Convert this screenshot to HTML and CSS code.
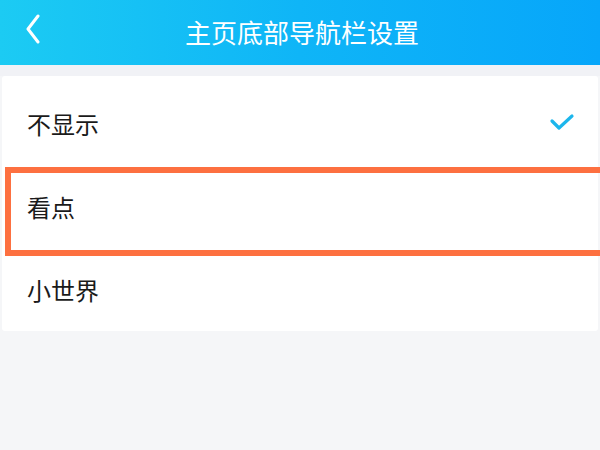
FILE: index.html
```html
<!DOCTYPE html>
<html lang="zh-CN">
<head>
<meta charset="utf-8">
<link rel="stylesheet" href="styles.css">
</head>
<body>
<div class="page">
  <header class="topbar">
    <span class="back">
      <svg width="16" height="30" viewBox="0 0 16 30"><path d="M13 2 L3 15 L13 28" fill="none" stroke="#fff" stroke-width="3" stroke-linecap="round" stroke-linejoin="round"/></svg>
    </span>
    <h1 class="title">主页底部导航栏设置</h1>
  </header>
  <div class="gap"></div>
  <ul class="card">
    <li class="row"><span class="label">不显示</span>
      <svg class="check" width="26" height="20" viewBox="0 0 26 20"><path d="M3 9 L10 16 L23 4" fill="none" stroke="#1cb6ec" stroke-width="3.2" stroke-linecap="round" stroke-linejoin="round"/></svg>
    </li>
    <li class="row"><span class="label">看点</span></li>
    <li class="row"><span class="label">小世界</span></li>
  </ul>
  <div class="highlight"></div>
</div>
</body>
</html>
```
FILE: styles.css
```css
* { box-sizing: border-box; }
html, body { margin: 0; padding: 0; }
body {
  width: 600px;
  height: 450px;
  overflow: hidden;
  background: #f5f6f8;
  font-family: "Noto Sans CJK SC", "Noto Sans", sans-serif;
}
.page { position: relative; width: 600px; height: 450px; }
.topbar {
  height: 65px;
  display: flex;
  align-items: center;
  justify-content: center;
  position: relative;
  background: linear-gradient(90deg, #1ccbf3 0%, #0fb5f7 50%, #07a6fa 100%);
}
.back {
  position: absolute;
  left: 25px;
  top: 14px;
  display: flex;
}
.title {
  margin: 0 0 2px 4px;
  color: #fff;
  font-size: 26px;
  font-weight: 400;
  letter-spacing: 0;
}
.gap { height: 11px; background: #f1f2f6; }
.card {
  list-style: none;
  margin: 0 2px;
  padding: 6px 0 0;
  background: #fff;
  border-radius: 3px;
}
.row {
  height: 83px;
  display: flex;
  align-items: center;
  justify-content: space-between;
  padding: 0 23px 0 25px;
}
.label {
  font-size: 24px;
  color: #1a1a1a;
}
.check { margin-top: -4px; }
.highlight {
  position: absolute;
  left: 5px;
  top: 167px;
  width: 600px;
  height: 89px;
  border: 6px solid #fd7040;
  border-right: none;
  pointer-events: none;
}
```
